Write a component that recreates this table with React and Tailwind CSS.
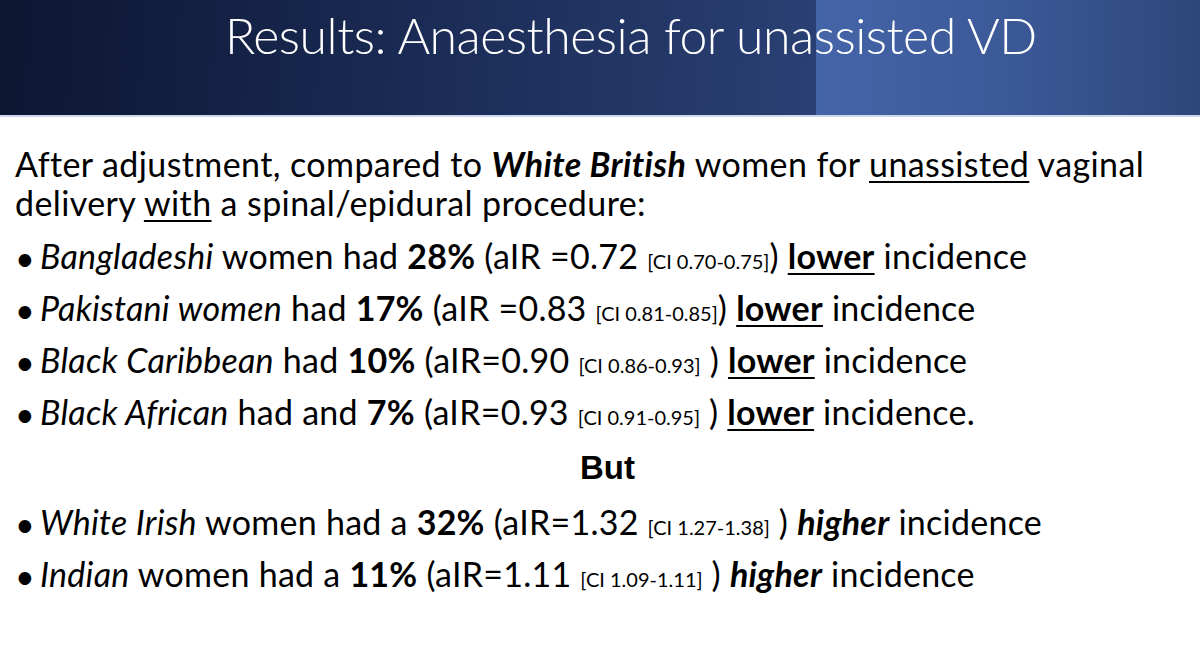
// Slide: ethnicity results for anaesthesia in unassisted vaginal delivery.
const BULLETS_LOWER = [
  { group: 'Bangladeshi', rest: ' women had ', pct: '28%', air: ' (aIR =0.72 ', ci: '[CI 0.70-0.75]', close: ')', end: ' incidence' },
  { group: 'Pakistani women', rest: ' had ', pct: '17%', air: ' (aIR =0.83 ', ci: '[CI 0.81-0.85]', close: ')', end: ' incidence' },
  { group: 'Black Caribbean', rest: ' had ', pct: '10%', air: ' (aIR=0.90 ', ci: '[CI 0.86-0.93]', close: ' )', end: ' incidence' },
  { group: 'Black African', rest: ' had and ', pct: '7%', air: ' (aIR=0.93 ', ci: '[CI 0.91-0.95]', close: ' )', end: ' incidence.' },
];

const BULLETS_HIGHER = [
  { group: 'White Irish', rest: ' women had a ', pct: '32%', air: ' (aIR=1.32 ', ci: '[CI 1.27-1.38]', close: ' )' },
  { group: 'Indian', rest: ' women had a ', pct: '11%', air: ' (aIR=1.11 ', ci: '[CI 1.09-1.11]', close: ' )' },
];

const Bullet = ({ children }) => (
  <li className="flex h-[52px] items-center leading-[52px] tracking-[0.25px]">
    <span className="w-[25px] shrink-0">•</span>
    <span className="whitespace-nowrap">{children}</span>
  </li>
);

const Stats = ({ row }) => (
  <>
    <i>{row.group}</i>
    {row.rest}
    <b>{row.pct}</b>
    {row.air}
    <span className="text-[20px] tracking-normal">{row.ci}</span>
    {row.close}{' '}
  </>
);

export default function App() {
  return (
    <div className="flex h-[660px] w-[1200px] flex-col overflow-hidden bg-white font-['Lato',sans-serif] text-black">
      {/* Title band */}
      <header className="flex h-[117px] shrink-0 border-b-2 border-[#cdd8ec] bg-[linear-gradient(90deg,transparent_68%,#4565a9_68%,#3b5896_85%,#2f4679_100%),linear-gradient(95deg,#0d1631_0%,#1a2b55_35%,#2a4074_68%)] pl-[225px] pt-[5px]">
        <h1 className="text-[50px] leading-[60px] font-light tracking-[-0.5px] text-white">
          Results: Anaesthesia for unassisted VD
        </h1>
      </header>

      <main className="flex flex-col pl-[15px] pt-[27px] text-[34px] tracking-[0.4px]">
        <p className="leading-[39px]">
          After adjustment, compared to <b><i>White British</i></b> women for{' '}
          <span className="underline decoration-2 underline-offset-4">unassisted</span> vaginal
          <br />
          delivery <span className="underline decoration-2 underline-offset-4">with</span> a spinal/epidural procedure:
        </p>

        <ul className="mt-[10px] flex flex-col">
          {BULLETS_LOWER.map((row) => (
            <Bullet key={row.group}>
              <Stats row={row} />
              <b className="underline decoration-2 underline-offset-4">lower</b>
              {row.end}
            </Bullet>
          ))}
        </ul>

        <div className="mt-[2px] h-[52px] text-center font-['Liberation_Sans',Arial,sans-serif] text-[33px] leading-[52px] font-bold tracking-normal">
          But
        </div>

        <ul className="mt-[4px] flex flex-col">
          {BULLETS_HIGHER.map((row) => (
            <Bullet key={row.group}>
              <Stats row={row} />
              <b><i>higher</i></b> incidence
            </Bullet>
          ))}
        </ul>
      </main>
    </div>
  );
}
